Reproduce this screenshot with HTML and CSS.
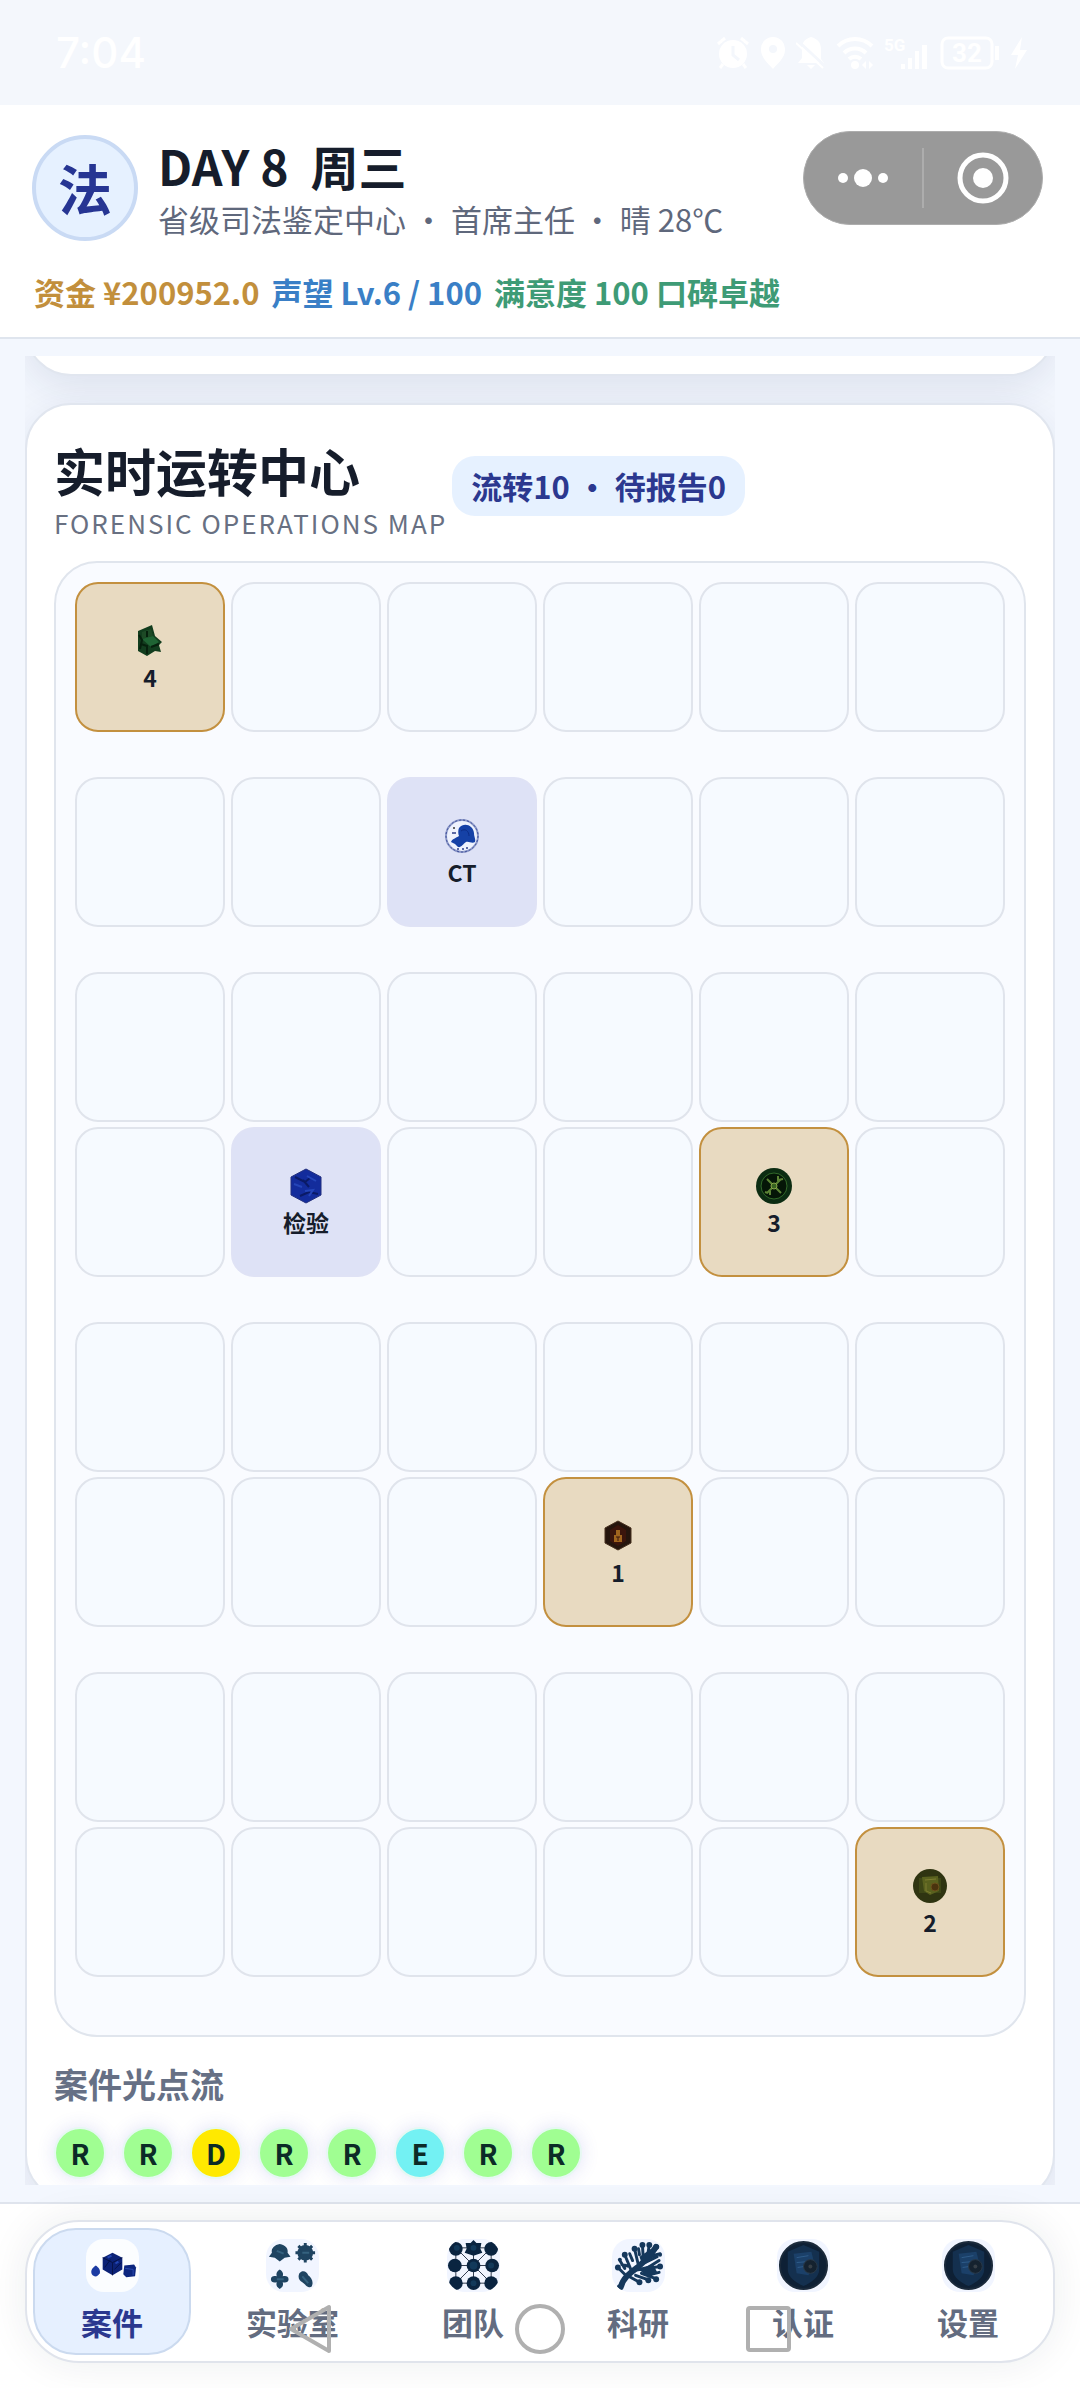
FILE: index.html
```html
<!DOCTYPE html>
<html lang="zh-CN">
<head>
    <meta charset="UTF-8">
    <meta name="viewport" content="width=device-width, initial-scale=1.0">
    <title>实时运转中心</title>
    <link rel="stylesheet" href="styles.css">
</head>
<body>
    <!-- Status bar -->
    <div class="status-bar">
        <span class="clock">7:04</span>
        <div class="status-icons">
            <svg width="34" height="34" viewBox="0 0 34 34"><circle cx="17" cy="18" r="14"/><path d="M2 8l7-6M32 8l-7-6M7 28l-3 4M27 28l3 4" stroke="#fff" stroke-width="3"/><path d="M17 10v9l6 5" fill="none" stroke="#f4f7fc" stroke-width="3"/></svg>
            <svg width="26" height="34" viewBox="0 0 26 34"><path d="M13 1a12 12 0 0 1 12 13c0 8-8 14-12 19C9 28 1 22 1 14A12 12 0 0 1 13 1z"/><circle cx="13" cy="13" r="4" fill="#f4f7fc"/></svg>
            <svg width="30" height="34" viewBox="0 0 30 34"><path d="M15 1c7 2 10 6 10 12v10l3 4H2l4-5V12C6 6 9 3 15 1z"/><path d="M11 29h8l-4 4z"/><path d="M1 4l28 26" stroke="#f4f7fc" stroke-width="3"/><path d="M0 7l27 25" stroke="#fff" stroke-width="2"/></svg>
            <svg width="38" height="34" viewBox="0 0 38 34"><g fill="none" stroke="#fff" stroke-width="4"><path d="M2 10a24 24 0 0 1 34 0M8 17a16 16 0 0 1 22 0M13 23a9 9 0 0 1 12 0"/></g><circle cx="19" cy="29" r="4"/><path d="M26 29l4-4v8zM37 29l-4-4v8z"/></svg>
            <svg width="46" height="34" viewBox="0 0 46 34"><text class="net-label" x="0" y="15">5G</text><path d="M17 28h4v5h-4zM24 22h4v11h-4zM31 15h4v18h-4zM38 9h5v24h-5z"/></svg>
            <svg width="60" height="34" viewBox="0 0 60 34"><rect x="2" y="2" width="50" height="30" rx="6" fill="none" stroke="#fff" stroke-width="3"/><path d="M55 10h4v14h-4z"/><text class="battery-label" x="27" y="26" text-anchor="middle">32</text></svg>
            <svg width="18" height="34" viewBox="0 0 18 34"><path d="M12 1L1 19h7L5 33l12-19h-7z"/></svg>
        </div>
    </div>

    <!-- Header -->
    <header class="header">
        <div class="profile">
            <div class="avatar">法</div>
            <div class="profile-text">
                <h1>DAY 8&nbsp; 周三</h1>
                <p>省级司法鉴定中心 · 首席主任 · 晴 28℃</p>
            </div>
            <div class="capsule">
                <button class="capsule-btn" aria-label="更多">
                    <svg width="52" height="20" viewBox="0 0 52 20"><circle cx="6" cy="10" r="5"/><circle cx="26" cy="10" r="9"/><circle cx="46" cy="10" r="5"/></svg>
                </button>
                <button class="capsule-btn capsule-close" aria-label="关闭">
                    <svg width="52" height="52" viewBox="0 0 52 52"><circle cx="26" cy="26" r="23" fill="none" stroke="#fff" stroke-width="5"/><circle cx="26" cy="26" r="10"/></svg>
                </button>
            </div>
        </div>
        <div class="stats">
            <span class="money">资金 ¥200952.0</span>
            <span class="fame">声望 Lv.6 / 100</span>
            <span class="praise">满意度 100 口碑卓越</span>
        </div>
    </header>

    <!-- Main Content -->
    <main class="content">
        <div class="scroll-view">
            <section class="card card-prev"></section>

            <section class="card">
                <div class="card-head">
                    <div>
                        <h2>实时运转中心</h2>
                        <p class="en-title">FORENSIC OPERATIONS MAP</p>
                    </div>
                    <span class="badge">流转10 · 待报告0</span>
                </div>

                <div class="board">
                    <div class="zone">
                        <button class="cell case">
                            <svg class="cell-icon" viewBox="0 0 36 36"><path d="M6 8l14-6 3 11 7 6-3 3 2 7-6-1-8 5-9-5V12z" fill="#123d1e"/><path d="M10 9l9-3 2 7-11 3z" fill="#1d4a26"/><path d="M10 16l11-3 6 6-8 5z" fill="#1f6434"/><path d="M7 12l3 5-2 9M19 24l8-3M15 8v6M9 21l6 2v8" stroke="#06200d" stroke-width="2" fill="none"/></svg>
                            <span>4</span>
                        </button>
                        <div class="cell"></div>
                        <div class="cell"></div>
                        <div class="cell"></div>
                        <div class="cell"></div>
                        <div class="cell"></div>
                    </div>

                    <div class="zone">
                        <div class="cell"></div>
                        <div class="cell"></div>
                        <button class="cell lab">
                            <svg class="cell-icon" viewBox="0 0 36 36"><circle cx="18" cy="18" r="16" fill="#eef2fd" stroke="#8d99c8" stroke-width="2"/><circle cx="18" cy="18" r="16" fill="none" stroke="#3d4f9b" stroke-width="1" stroke-dasharray="2 2"/><path d="M15 10c5-6 14-3 15 5 0 4 2 6 1 9-3 2-6-1-9 0-3 2-5 6-8 5l-3-3-4-2c1-3 5-4 8-6-1-2-1-6 0-8z" fill="#1541a6"/><path d="M17 13c4-3 8 0 8 5" stroke="#0c2c86" stroke-width="1" fill="none"/><circle cx="10" cy="10" r="1" fill="#333"/><path d="M8 15h4M13 31h2M18 31h2M22 30h2" stroke="#5c6aa5" stroke-width="2"/></svg>
                            <span>CT</span>
                        </button>
                        <div class="cell"></div>
                        <div class="cell"></div>
                        <div class="cell"></div>
                    </div>

                    <div class="zone">
                        <div class="cell"></div>
                        <div class="cell"></div>
                        <div class="cell"></div>
                        <div class="cell"></div>
                        <div class="cell"></div>
                        <div class="cell"></div>
                        <div class="cell"></div>
                        <button class="cell lab">
                            <svg class="cell-icon" viewBox="0 0 36 36"><path d="M18 1l15 8v18l-15 8-15-8V9z" fill="#132c9c" stroke="#222f7e"/><path d="M7 9l10 5 5-4M15 12l6 7M12 28l9-4 9 2" stroke="#0a1a66" stroke-width="2" fill="none"/><path d="M19 8l9 5M6 16l8 3M17 23l8-1-4 6" stroke="#2445b8" stroke-width="2" fill="none"/></svg>
                            <span>检验</span>
                        </button>
                        <div class="cell"></div>
                        <div class="cell"></div>
                        <button class="cell case">
                            <svg class="cell-icon" viewBox="0 0 36 36"><circle cx="18" cy="18" r="18" fill="#0c2c12"/><circle cx="18" cy="18" r="13" fill="#051607" stroke="#316829" stroke-width="1"/><path d="M11 11l14 14M25 11L11 25M22 12l5-1M12 25l-3-1M22 8v5M14 23v4" stroke="#5c8435" stroke-width="2"/><circle cx="18" cy="18" r="3" fill="#37631f" stroke="#8aa54a"/></svg>
                            <span>3</span>
                        </button>
                        <div class="cell"></div>
                    </div>

                    <div class="zone">
                        <div class="cell"></div>
                        <div class="cell"></div>
                        <div class="cell"></div>
                        <div class="cell"></div>
                        <div class="cell"></div>
                        <div class="cell"></div>
                        <div class="cell"></div>
                        <div class="cell"></div>
                        <div class="cell"></div>
                        <button class="cell case">
                            <svg class="cell-icon" viewBox="0 0 36 36"><path d="M18 3l13 7v15l-13 7-13-7V10z" fill="#25150d" stroke="#46301f"/><path d="M18 7l8 5v11l-8 5-8-5V12z" fill="#3b150c"/><path d="M14 17h8v7h-8zM16 12h4v5h-4z" fill="#a0641e"/><path d="M18 19v4M16 19h4" stroke="#3b150c"/></svg>
                            <span>1</span>
                        </button>
                        <div class="cell"></div>
                        <div class="cell"></div>
                    </div>

                    <div class="zone">
                        <div class="cell"></div>
                        <div class="cell"></div>
                        <div class="cell"></div>
                        <div class="cell"></div>
                        <div class="cell"></div>
                        <div class="cell"></div>
                        <div class="cell"></div>
                        <div class="cell"></div>
                        <div class="cell"></div>
                        <div class="cell"></div>
                        <div class="cell"></div>
                        <button class="cell case">
                            <svg class="cell-icon" viewBox="0 0 36 36"><circle cx="18" cy="18" r="17" fill="#2f3411"/><path d="M7 10h22v15H7z" fill="#3d4616"/><path d="M10 9l16-1 1 15-9 4-6-4z" fill="#59611e"/><path d="M13 12l11-1M14 15v8l5 2" stroke="#7c7d30" fill="none"/><circle cx="23" cy="19" r="4" fill="#4a330e" stroke="#6b521b"/></svg>
                            <span>2</span>
                        </button>
                    </div>
                </div>

                <h3>案件光点流</h3>
                <div class="dots">
                    <span class="dot rank-r">R</span>
                    <span class="dot rank-r">R</span>
                    <span class="dot rank-d">D</span>
                    <span class="dot rank-r">R</span>
                    <span class="dot rank-r">R</span>
                    <span class="dot rank-e">E</span>
                    <span class="dot rank-r">R</span>
                    <span class="dot rank-r">R</span>
                </div>
            </section>
        </div>
    </main>

    <!-- Bottom Bar -->
    <footer class="footer">
        <nav class="tabs">
            <button class="tab active">
                <svg class="tab-icon" viewBox="0 0 54 54"><path d="M27 14l10 5v12l-10 6-10-6V19z" fill="#0c2276"/><path d="M17 19l10 5 10-5M27 24v13M19 29l6-8M29 31l7-7" stroke="#061349" stroke-width="1" fill="none"/><path d="M22 19l4-2M30 25l3-2" stroke="#2346b3" stroke-width="2"/><path d="M10 27c3 2 5 5 4 8-2 4-6 4-8 1-2-4 1-7 4-9z" fill="#1b3ba3"/><path d="M39 27l10-1 2 3-1 9-9 1-3-3z" fill="#0d267f"/><path d="M40 30l8 1v6" stroke="#2b4bb0" fill="none"/></svg>
                <span>案件</span>
            </button>
            <button class="tab">
                <svg class="tab-icon" viewBox="0 0 54 54"><g fill="#1f4461"><path d="M14 5c6 1 9 5 8 9l3 4-6 1-5 4-5-4-6-1 3-4c-1-5 3-8 8-9z"/><circle cx="40" cy="14" r="8"/><path d="M14 31c3 2 4 4 3 7 3-1 6 0 6 3s-3 4-6 3c1 3 0 5-3 7-3-2-4-4-3-7-3 1-6 0-6-3s3-4 6-3c-1-3 0-5 3-7z"/><path d="M34 35c3-4 8-2 9 2 4 3 6 8 3 12-4 1-6-3-9-5-3-1-5-5-3-9z"/></g><path d="M40 4v20M30 14h20M33 7l14 14M47 7L33 21" stroke="#1f4461" stroke-width="3"/><path d="M11 12l7 3M11 41h7M37 38l6 7M37 14h7" stroke="#35627f" stroke-width="2"/></svg>
                <span>实验室</span>
            </button>
            <button class="tab">
                <svg class="tab-icon" viewBox="0 0 54 54"><path d="M9 9h36v36H9zM9 27h36M27 9v36M9 9l36 36M45 9L9 45" stroke="#303a4c" fill="none"/><g fill="#0a2440"><circle cx="9" cy="10" r="7"/><path d="M27 1l3 3h5l-1 6 2 4-9 3-9-3 2-4-1-6h5z"/><circle cx="45" cy="10" r="7"/><circle cx="8" cy="27" r="7"/><circle cx="27" cy="27" r="7"/><circle cx="46" cy="27" r="7"/><circle cx="9" cy="45" r="7"/><circle cx="27" cy="45" r="7"/><circle cx="45" cy="45" r="7"/></g><g fill="#12395a"><circle cx="27" cy="9" r="3"/><circle cx="27" cy="27" r="4"/><circle cx="45" cy="27" r="3"/><circle cx="27" cy="45" r="3"/><circle cx="10" cy="9" r="3"/></g></svg>
                <span>团队</span>
            </button>
            <button class="tab">
                <svg class="tab-icon" viewBox="0 0 54 54"><g fill="none" stroke="#15385c" stroke-width="3" stroke-linecap="round"><path d="M9 49c2-9 9-14 18-21 7-6 12-11 18-20" stroke-width="6"/><path d="M15 38L6 29M20 33l-7-17M13 30L8 22M27 27L23 10M32 22L31 6M36 18l2-12M23 32l26-4M35 30l13-8M37 18l12-3M30 35l16 6M24 37l14 5M17 38l11 6M34 24l12-6M21 22l-3-7M18 28l-8-2M40 36l8-2M28 16l-1-6"/></g><path d="M26 30l16-4 4 8-10 4zM28 18l12-8 4 8-14 6z" fill="#15385c"/><g fill="#15385c"><circle cx="6" cy="29" r="3"/><circle cx="13" cy="16" r="3"/><circle cx="23" cy="10" r="3"/><circle cx="31" cy="6" r="3"/><circle cx="38" cy="6" r="3"/><circle cx="45" cy="8" r="3"/><circle cx="49" cy="16" r="2"/><circle cx="49" cy="28" r="3"/><circle cx="45" cy="41" r="3"/><circle cx="37" cy="42" r="3"/><circle cx="28" cy="44" r="3"/><circle cx="8" cy="49" r="3"/><circle cx="8" cy="21" r="2"/></g></svg>
                <span>科研</span>
            </button>
            <button class="tab">
                <svg class="tab-icon" viewBox="0 0 54 54"><circle cx="27" cy="27" r="24" fill="#0e2035" stroke="#1b2a3b" stroke-width="2"/><path d="M27 6l16 7v18c0 8-8 13-16 17-8-4-16-9-16-17V13z" fill="#14304f"/><path d="M17 15l18-2 3 12-6 12-12-2z" fill="#1b4069"/><path d="M20 19l12-2M20 24l12-1M21 29l7-1" stroke="#2f5c8a" stroke-width="1"/><circle cx="34" cy="28" r="7" fill="#15222f" stroke="#2a3a4a" stroke-width="1"/><circle cx="34" cy="28" r="2" fill="#363f47"/></svg>
                <span>认证</span>
            </button>
            <button class="tab">
                <svg class="tab-icon" viewBox="0 0 54 54"><circle cx="27" cy="27" r="24" fill="#0e2035" stroke="#1b2a3b" stroke-width="2"/><path d="M27 6l16 7v18c0 8-8 13-16 17-8-4-16-9-16-17V13z" fill="#14304f"/><path d="M17 15l18-2 3 12-6 12-12-2z" fill="#1b4069"/><path d="M20 19l12-2M20 24l12-1M21 29l7-1" stroke="#2f5c8a" stroke-width="1"/><circle cx="34" cy="28" r="7" fill="#15222f" stroke="#2a3a4a" stroke-width="1"/><circle cx="34" cy="28" r="2" fill="#363f47"/></svg>
                <span>设置</span>
            </button>
        </nav>
    </footer>

    <!-- System navigation keys, drawn over the tabs -->
    <div class="system-keys">
        <svg width="50" height="50" viewBox="0 0 50 50"><path d="M43 3v44L5 25z" stroke-linejoin="round"/></svg>
        <svg width="50" height="50" viewBox="0 0 50 50"><circle cx="25" cy="25" r="23"/></svg>
        <svg width="50" height="50" viewBox="0 0 50 50"><rect x="4" y="4" width="41" height="42" rx="2"/></svg>
    </div>
</body>
</html>
```
FILE: styles.css
```css
* {
    box-sizing: border-box;
}
body {
    font-family: "Noto Sans CJK SC", "Noto Sans", sans-serif;
    margin: 0;
    height: 100vh;
    display: flex;
    flex-direction: column;
    background: #f3f7fe;
    color: #161d2b;
    position: relative;
    overflow: hidden;
}
h1, h2, h3, p {
    margin: 0;
}
button {
    font-family: inherit;
    color: inherit;
    margin: 0;
    padding: 0;
    border: none;
    background: none;
    cursor: pointer;
}
svg {
    display: block;
}

/* Status bar */
.status-bar {
    height: 105px;
    padding: 0 52px 0 56px;
    display: flex;
    justify-content: space-between;
    align-items: center;
    background: #f4f7fc;
    color: #fff;
}
.clock {
    font-family: Inter, sans-serif;
    font-size: 42px;
    font-weight: 500;
    line-height: 50px;
}
.status-icons {
    display: flex;
    gap: 10px;
}
.status-icons svg {
    fill: #fff;
}
.net-label {
    font: bold 17px Roboto, sans-serif;
}
.battery-label {
    font: bold 26px Roboto, sans-serif;
}

/* Header */
.header {
    padding: 26px 32px 22px;
    background: #fff;
    border-bottom: 2px solid #dfe5ee;
}
.profile {
    display: flex;
    align-items: center;
    gap: 20px;
    padding-top: 3px;
}
.avatar {
    width: 106px;
    height: 106px;
    flex: none;
    border: 4px solid #c9daf4;
    border-radius: 50%;
    background: #e6f1ff;
    color: #263593;
    font-size: 54px;
    font-weight: bold;
    line-height: 98px;
    text-align: center;
}
.profile-text {
    flex: 1;
}
.profile-text h1 {
    font-size: 48px;
    line-height: 62px;
}
.profile-text p {
    color: #5f687c;
    font-size: 31px;
    line-height: 46px;
}
.capsule {
    display: flex;
    align-self: flex-start;
    width: 240px;
    height: 94px;
    border: 1px solid #adadad;
    border-radius: 47px;
    background: #999;
    margin: -3px 5px 0 0;
}
.capsule-btn {
    flex: 1;
    display: flex;
    align-items: center;
    justify-content: center;
    margin: 16px 0;
}
.capsule-close {
    border-left: 2px solid #adadad;
}
.capsule svg {
    fill: #fff;
}
.stats {
    display: flex;
    gap: 12px;
    margin-top: 27px;
    padding-left: 2px;
    font-size: 31px;
    font-weight: bold;
    line-height: 46px;
}
.money {
    color: #c28f3c;
}
.fame {
    color: #3a7fc6;
}
.praise {
    color: #3e9b76;
}

/* Main Content */
.content {
    flex: 1;
    min-height: 0;
    padding: 17px 25px;
}
.scroll-view {
    height: 100%;
    overflow: hidden;
}
.card {
    padding: 28px 27px 20px;
    border: 2px solid #e1e6ef;
    border-radius: 46px;
    background: #fff;
    box-shadow: 0 12px 40px rgba(31, 41, 85, 0.1);
}
.card-prev {
    height: 120px;
    margin-top: -100px;
    margin-bottom: 27px;
}
.card-head {
    display: flex;
    align-items: center;
    gap: 5px;
    margin-bottom: 22px;
}
.card-head h2 {
    font-size: 51px;
    line-height: 74px;
}
.en-title {
    color: #687082;
    font-size: 26px;
    line-height: 32px;
    letter-spacing: 2px;
}
.badge {
    padding: 8px 19px;
    border-radius: 23px;
    background: #e6f1ff;
    color: #2b388f;
    font-size: 31px;
    font-weight: bold;
    line-height: 44px;
}

/* Map board */
.board {
    display: flex;
    flex-direction: column;
    gap: 45px;
    padding: 19px 19px 58px;
    border: 2px solid #e0e5ed;
    border-radius: 43px;
    background: #f9fbff;
}
.zone {
    display: grid;
    grid-template-columns: repeat(6, 1fr);
    gap: 5px 6px;
}
.cell {
    height: 150px;
    padding-top: 4px;
    border: 2px solid #e0e4ec;
    border-radius: 23px;
    background: #f6faff;
    display: flex;
    flex-direction: column;
    align-items: center;
    justify-content: center;
    font-size: 23px;
    font-weight: bold;
    line-height: 36px;
}
.cell-icon {
    width: 36px;
    height: 36px;
}
.case {
    border-color: #c3903f;
    background: #e8dac1;
}
.lab {
    border-color: #dfe2f5;
    background: #dee2f6;
}

/* Case dots */
.card h3 {
    margin-top: 22px;
    color: #667085;
    font-size: 34px;
    line-height: 50px;
}
.dots {
    display: flex;
    gap: 16px;
    margin-top: 18px;
}
.dot {
    width: 52px;
    height: 52px;
    border: 2px solid #e6f8f2;
    border-radius: 50%;
    box-shadow: 0 0 18px rgba(60, 70, 200, 0.15);
    color: #0c2b27;
    font-size: 28px;
    font-weight: bold;
    line-height: 48px;
    text-align: center;
}
.rank-r {
    background: #a0fe92;
}
.rank-d {
    background: #ffe900;
}
.rank-e {
    background: #73f1f3;
}

/* Bottom Bar */
.footer {
    padding: 16px 25px 25px;
    border-top: 2px solid #dfe4ed;
    background: #fff;
}
.tabs {
    display: flex;
    gap: 7px;
    padding: 6px;
    border: 2px solid #e0e4ec;
    border-radius: 54px;
    background: #fff;
    box-shadow: 0 0 40px rgba(31, 41, 55, 0.08);
}
.tab {
    flex: 1 1 auto;
    display: flex;
    flex-direction: column;
    align-items: center;
    gap: 7px;
    padding: 9px 0 8px;
    border: 2px solid transparent;
    border-radius: 43px;
    color: #636c80;
    font-size: 31px;
    font-weight: bold;
    line-height: 46px;
}
.tab.active {
    border-color: #cbdaef;
    background: #e6f0ff;
    color: #2b388f;
}
.tab-icon {
    width: 53px;
    height: 53px;
    border-radius: 18px;
    background: #f1f5ff;
}
.active .tab-icon {
    background: #fbfdff;
}

/* System keys */
.system-keys {
    position: absolute;
    left: 0;
    right: 0;
    bottom: 34px;
    display: flex;
    justify-content: center;
    gap: 179px;
    pointer-events: none;
}
.system-keys svg {
    fill: none;
    stroke: #b0b0b0;
    stroke-width: 4;
}
```
